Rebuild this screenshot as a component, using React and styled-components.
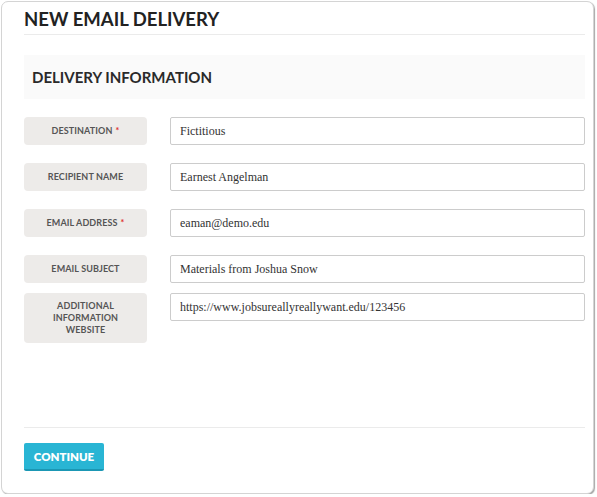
import React from "react";
import styled, { createGlobalStyle } from "styled-components";

const GlobalStyle = createGlobalStyle`
  html, body {
    margin: 0;
    padding: 0;
    background: #ffffff;
  }
  * {
    box-sizing: border-box;
  }
`;

const Card = styled.div`
  margin: 1px 0 0 1px;
  width: 593px;
  height: 493px;
  border: 1px solid #d4d4d4;
  border-radius: 7px;
  box-shadow: 1px 1px 1px rgba(0, 0, 0, 0.35);
  background: #ffffff;
  padding: 0 8px 0 22px;
  display: flex;
  flex-direction: column;
  font-family: "Lato", "Liberation Sans", sans-serif;
`;

const Title = styled.h1`
  margin: 0;
  padding-top: 6px;
  height: 33px;
  font-size: 18.5px;
  font-weight: 700;
  color: #222;
  border-bottom: 1px solid #ebebeb;
`;

const Section = styled.div`
  margin-top: 20px;
  height: 44px;
  background: #fafafa;
  display: flex;
  align-items: center;
  padding-left: 8px;
  h2 {
    margin: 0;
    font-size: 15px;
    font-weight: 700;
    color: #2a2a2a;
  }
`;

const Form = styled.div`
  padding-top: 18px;
  flex: 1;
  display: flex;
  flex-direction: column;
`;

const Row = styled.div`
  display: flex;
  align-items: flex-start;
  gap: 23px;
  margin-bottom: ${(p) => (p.tight ? "10px" : "18px")};
`;

const Label = styled.div`
  width: 123px;
  min-height: 28px;
  flex-shrink: 0;
  background: #edebe9;
  border-radius: 4px;
  display: flex;
  align-items: center;
  justify-content: center;
  text-align: center;
  padding: 7px 14px;
  font-size: 9px;
  font-weight: 700;
  line-height: 12px;
  letter-spacing: 0.1px;
  color: #555;
  text-transform: uppercase;

  span {
    color: #e0302a;
    margin-left: 3px;
  }
`;

const Input = styled.input`
  flex: 1;
  height: 28px;
  border: 1px solid #cccccc;
  border-radius: 2px;
  padding: 0 9px;
  font-family: "Liberation Serif", "Times New Roman", serif;
  font-size: 12px;
  color: #333;
  background: #fff;
  outline: none;
`;

const Footer = styled.div`
  border-top: 1px solid #ebebeb;
  padding-top: 15px;
  height: 66px;
`;

const Button = styled.button`
  width: 80px;
  height: 28px;
  border: none;
  border-bottom: 2px solid #1b97b4;
  border-radius: 2px;
  background: #29b5d4;
  color: #fff;
  font-family: "Lato", "Liberation Sans", sans-serif;
  font-weight: 800;
  font-size: 11.5px;
  cursor: pointer;
`;

const fields = [
  { label: "Destination", required: true, value: "Fictitious" },
  { label: "Recipient Name", value: "Earnest Angelman" },
  { label: "Email Address", required: true, value: "eaman@demo.edu" },
  { label: "Email Subject", value: "Materials from Joshua Snow", tight: true },
  {
    label: "Additional Information Website",
    value: "https://www.jobsureallyreallywant.edu/123456",
  },
];

export default function App() {
  return (
    <>
      <GlobalStyle />
      <Card>
        <Title>NEW EMAIL DELIVERY</Title>
        <Section>
          <h2>DELIVERY INFORMATION</h2>
        </Section>
        <Form>
          {fields.map((f) => (
            <Row key={f.label} tight={f.tight}>
              <Label>
                <div>
                  {f.label}
                  {f.required && <span>*</span>}
                </div>
              </Label>
              <Input defaultValue={f.value} />
            </Row>
          ))}
        </Form>
        <Footer>
          <Button>CONTINUE</Button>
        </Footer>
      </Card>
    </>
  );
}
